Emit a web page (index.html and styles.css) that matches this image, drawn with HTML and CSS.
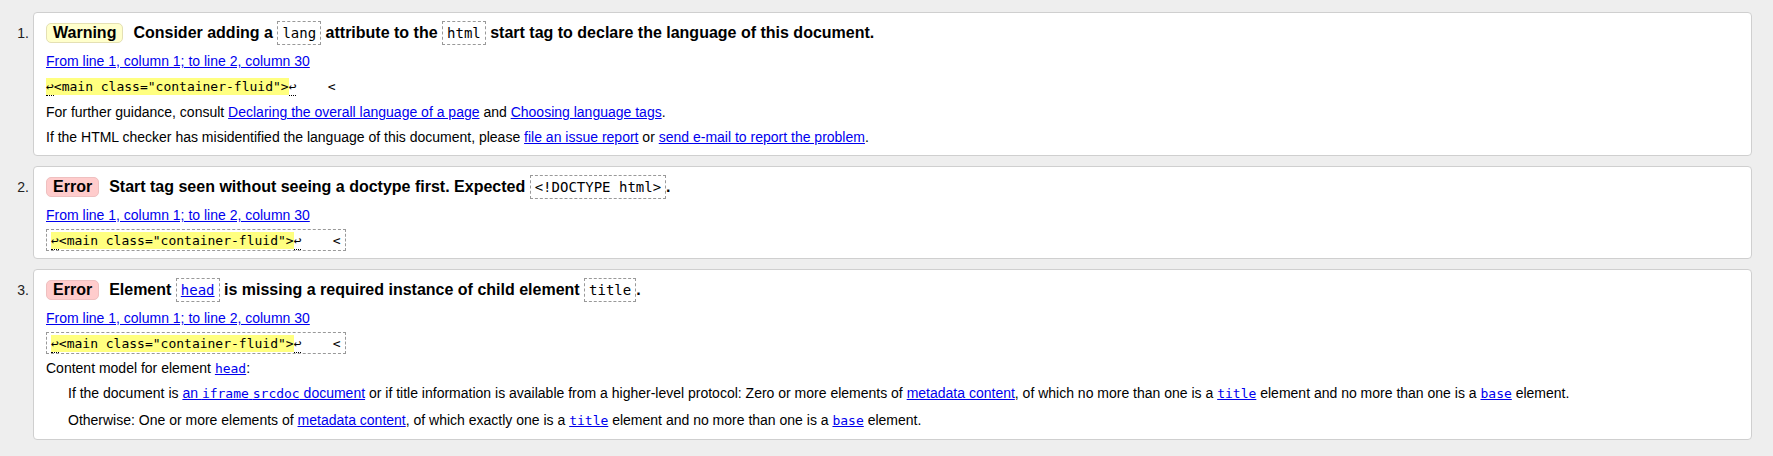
FILE: index.html
```html
<!DOCTYPE html>
<html lang="en">
<head>
<meta charset="utf-8">
<title>Messages</title>
<link rel="stylesheet" href="styles.css">
</head>
<body>
<ol class="messages">
  <li class="msg">
    <span class="num">1.</span>
    <div class="card">
      <p class="title"><strong class="badge badge-warning">Warning</strong><span>Consider adding a <code class="tag">lang</code> attribute to the <code class="tag">html</code> start tag to declare the language of this document.</span></p>
      <p class="location"><a href="#">From line 1, column 1; to line 2, column 30</a></p>
      <p class="extract"><code class="ext"><mark><b class="lf">↩</b>&lt;main class="container-fluid"&gt;</mark><b class="lf">↩</b>    &lt;</code></p>
      <p class="text">For further guidance, consult <a href="#">Declaring the overall language of a page</a> and <a href="#">Choosing language tags</a>.</p>
      <p class="text last">If the HTML checker has misidentified the language of this document, please <a href="#">file an issue report</a> or <a href="#">send e-mail to report the problem</a>.</p>
    </div>
  </li>
  <li class="msg">
    <span class="num">2.</span>
    <div class="card">
      <p class="title"><strong class="badge badge-error">Error</strong><span>Start tag seen without seeing a doctype first. Expected <code class="tag">&lt;!DOCTYPE html&gt;</code>.</span></p>
      <p class="location"><a href="#">From line 1, column 1; to line 2, column 30</a></p>
      <p class="extract boxed"><code class="ext"><mark><b class="lf">↩</b>&lt;main class="container-fluid"&gt;</mark><b class="lf">↩</b>    &lt;</code></p>
    </div>
  </li>
  <li class="msg">
    <span class="num">3.</span>
    <div class="card">
      <p class="title"><strong class="badge badge-error">Error</strong><span>Element <code class="tag"><a href="#">head</a></code> is missing a required instance of child element <code class="tag">title</code>.</span></p>
      <p class="location"><a href="#">From line 1, column 1; to line 2, column 30</a></p>
      <p class="extract boxed"><code class="ext"><mark><b class="lf">↩</b>&lt;main class="container-fluid"&gt;</mark><b class="lf">↩</b>    &lt;</code></p>
      <p class="text model">Content model for element <a href="#"><code class="mono">head</code></a>:</p>
      <dl class="defs">
        <dd class="first">If the document is <a href="#">an <code class="mono">iframe</code> <code class="mono">srcdoc</code> document</a> or if title information is available from a higher-level protocol: Zero or more elements of <a href="#">metadata content</a>, of which no more than one is a <a href="#"><code class="mono">title</code></a> element and no more than one is a <a href="#"><code class="mono">base</code></a> element.</dd>
        <dd class="second">Otherwise: One or more elements of <a href="#">metadata content</a>, of which exactly one is a <a href="#"><code class="mono">title</code></a> element and no more than one is a <a href="#"><code class="mono">base</code></a> element.</dd>
      </dl>
    </div>
  </li>
</ol>
</body>
</html>
```

FILE: styles.css
```css
html, body {
  margin: 0;
  background: #eeeeee;
}

body {
  font-family: "Liberation Sans", Arial, sans-serif;
  font-size: 14px;
  color: #000;
}

a {
  color: #0000ee;
}

.messages {
  list-style: none;
  margin: 0;
  padding: 12px 21px 0 0;
}

.msg {
  display: flex;
  align-items: baseline;
  gap: 4px;
  margin-bottom: 10px;
}

.num {
  flex: none;
  width: 29px;
  text-align: right;
  font-size: 14px;
  color: #222;
}

.card {
  flex: 1;
  min-width: 0;
  background: #fff;
  border: 1px solid #cfcfcf;
  border-radius: 4px;
  padding: 10px 12px 7px;
}

.card p {
  margin: 0;
  line-height: 18px;
}

.card .title {
  height: 20px;
  line-height: 20px;
  font-size: 16px;
  font-weight: bold;
  white-space: nowrap;
}

.badge {
  display: inline-block;
  padding: 0 6px;
  line-height: 18px;
  border: 1px solid;
  border-radius: 5px;
  margin-right: 10px;
}

.badge-warning {
  background: #ffffcc;
  border-color: #e4e0b4;
}

.badge-error {
  background: #ffcccc;
  border-color: #efc0c0;
}

.tag {
  font-family: "DejaVu Sans Mono", monospace;
  font-size: 14px;
  font-weight: normal;
  border: 1px dashed #999;
  padding: 3px 4px;
}

.card .location {
  margin-top: 9px;
}

.card .extract {
  margin-top: 7px;
}

.card .extract.boxed {
  margin-top: 5px;
}

.ext {
  font-family: "DejaVu Sans Mono", monospace;
  font-size: 13px;
  white-space: pre;
}

.extract.boxed .ext {
  display: block;
  width: fit-content;
  border: 1px dashed #999;
  padding: 2px 4px 1px;
  line-height: 17px;
}

mark {
  background: #ffff80;
  color: inherit;
  padding: 1px 0;
}

.lf {
  font-weight: normal;
  border-bottom: 1px dotted #000;
  padding-bottom: 1px;
}

.card .text {
  margin-top: 7px;
}

.card .text.last {
  margin-bottom: 2px;
}

.card .text.model {
  margin-top: 5px;
}

.mono {
  font-family: "DejaVu Sans Mono", monospace;
  font-size: 13px;
}

.defs {
  margin: 0 0 2px;
}

.defs dd {
  margin: 0 0 0 22px;
  line-height: 18px;
}

.defs dd.first {
  margin-top: 6px;
}

.defs dd.second {
  margin-top: 8px;
}
```
